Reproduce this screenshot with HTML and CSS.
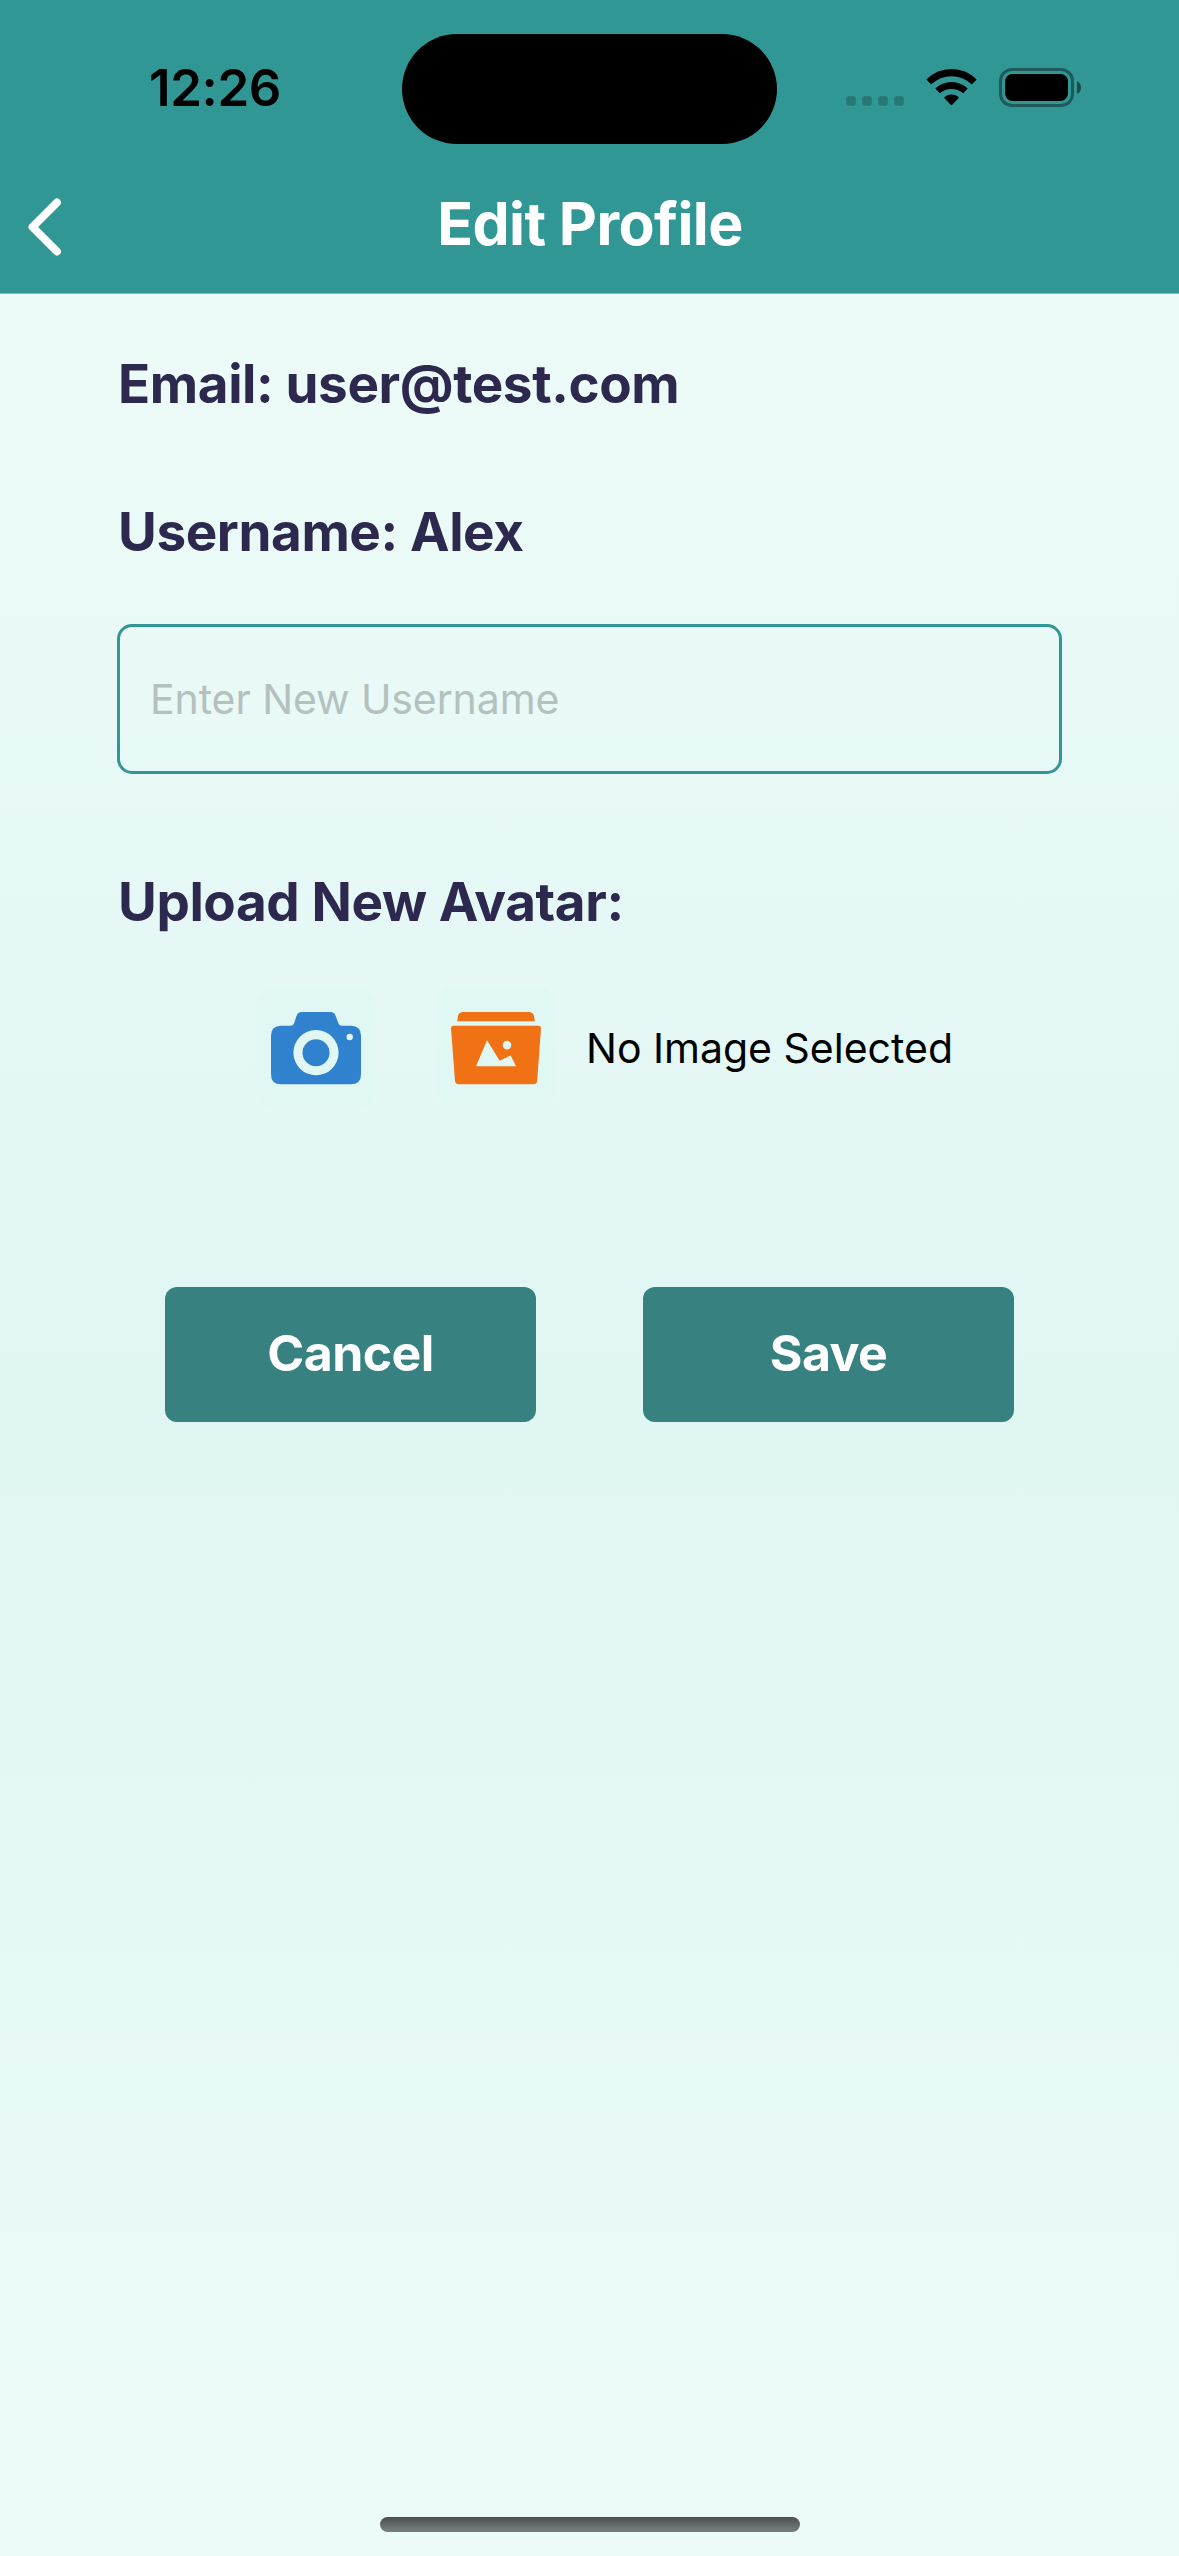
FILE: index.html
```html
<!DOCTYPE html>
<html lang="en">
<head>
<meta charset="utf-8">
<title>Edit Profile</title>
<link rel="stylesheet" href="styles.css">
</head>
<body>
<div class="screen">
  <header class="header">
    <div class="status">
      <div class="time">12:26</div>
      <div class="island"></div>
      <div class="indicators">
        <svg class="dots" width="58" height="10" viewBox="0 0 58 10"><rect width="10" height="10" rx="4"/><rect x="16" width="10" height="10" rx="4"/><rect x="32" width="10" height="10" rx="4"/><rect x="48" width="10" height="10" rx="4"/></svg>
        <svg class="wifi" width="51" height="38" viewBox="0 0 51 38"><path d="M0.3 11.4Q11 1 25.5 1T50.7 11.4L45.8 16.4Q37 8.2 25.500 8.200T5.200 16.400Z"/><path d="M9.300 20.600Q16 13.900 25.500 13.900T41.700 20.600L37.200 25.200Q32 20.900 25.500 20.900T13.800 25.200Z"/><path d="M18 29.700Q21 26.500 25.500 26.500T33 29.700L25.500 37.500Z"/></svg>
        <svg class="battery" width="83" height="39" viewBox="0 0 83 39"><rect class="battery-case" x="1.500" y="1.500" width="72" height="36" rx="11.500"/><rect x="6" y="6" width="63" height="27" rx="7.500"/><path class="battery-tip" d="M78 13Q82 15 82 19.500T78 26Z"/></svg>
      </div>
    </div>
    <div class="navbar">
      <svg class="back" width="34" height="58" viewBox="0 0 34 58"><path d="M29 4.500L4.500 29L29 53.500"/></svg>
      <h1 class="title">Edit Profile</h1>
    </div>
  </header>
  <main class="form">
    <p class="label email">Email: user@test.com</p>
    <p class="label username">Username: Alex</p>
    <input class="field" type="text" placeholder="Enter New Username">
    <p class="label upload">Upload New Avatar:</p>
    <div class="picker">
      <button class="tile" aria-label="Camera"><svg width="120" height="120" viewBox="0 0 120 120"><path fill="#3182ce" fill-rule="evenodd" d="M45.500 24H74.500Q78.300 24 79.500 27.500L82.500 35.500Q83.300 37.700 86 37.700H95Q105 37.700 105 47.700V86.300Q105 96.300 95 96.300H25Q15 96.300 15 86.300V47.700Q15 37.700 25 37.700H34.500Q37.200 37.700 38 35.500L40.700 27.500Q41.900 24 45.500 24ZM60 42.100A22.600 22.600 0 1 0 60 87.300A22.600 22.600 0 1 0 60 42.100ZM60 51.200A13.500 13.500 0 1 1 60 78.200A13.500 13.500 0 1 1 60 51.200ZM93.700 45.800A3.200 3.200 0 1 0 93.700 52.200A3.200 3.200 0 1 0 93.700 45.800Z"/></svg></button>
      <button class="tile" aria-label="Gallery"><svg width="120" height="120" viewBox="0 0 120 120"><g fill="#f07214"><path d="M27.500 24H92.500Q97.200 24 98 28L98.800 33.200H21.200L22 28Q22.800 24 27.500 24Z"/><path fill-rule="evenodd" d="M17.500 37.700H102.500Q105.200 37.700 105 40.500L101.200 92.500Q101 96.300 97.500 96.300H22.500Q19.300 96.300 19 92.500L15 40.500Q14.800 37.700 17.500 37.700ZM40 78.300H80L74.700 67.500L63.700 72.700L51 52.300ZM71 52.800A4.300 4.300 0 1 0 71 61.400A4.300 4.300 0 1 0 71 52.800Z"/></g></svg></button>
      <span class="hint">No Image Selected</span>
    </div>
    <div class="actions">
      <button class="action cancel">Cancel</button>
      <button class="action save">Save</button>
    </div>
  </main>
  <div class="home-bar"></div>
</div>
</body>
</html>
```
FILE: styles.css
```css
* { box-sizing: border-box; margin: 0; padding: 0; }

body, button, input { font-family: Inter, "Liberation Sans", sans-serif; }

.screen {
  width: 1179px;
  height: 2556px;
  display: flex;
  flex-direction: column;
  align-items: stretch;
  background: linear-gradient(180deg, #edfbf8 294px, #e0f6f3 1425px, #edfbf8 2556px);
}

.header {
  height: 294px;
  background: #319795;
  border-bottom: 1px solid #93b5b3;
}

.status {
  height: 177px;
  padding: 33px 98px 0 149px;
  display: grid;
  grid-template-columns: 253px 375px 1fr;
}

.time {
  padding-top: 25px;
  font-size: 51px;
  line-height: 60px;
  font-weight: 600;
  letter-spacing: -0.4px;
}

.island { height: 110.700px; margin-top: 0.500px; border-radius: 56px; background: #000; }

.indicators { display: flex; align-items: flex-start; padding: 35px 0 0 69px; }
.dots { margin-top: 28px; opacity: 0.2; }
.wifi { margin-left: 22px; }
.battery { margin-left: 22px; }
.battery-case { fill: none; stroke: #000; stroke-width: 3; opacity: 0.4; }
.battery-tip { opacity: 0.5; }

.navbar {
  height: 116px;
  padding: 0 28px;
  display: grid;
  grid-template-columns: 34px 1fr 34px;
}

.back { margin-top: 21px; fill: none; stroke: #fff; stroke-width: 8; stroke-linecap: round; stroke-linejoin: round; }
.title {
  padding: 11px 0 0 1px;
  color: #fff;
  font-size: 59px;
  line-height: 72px;
  font-weight: 700;
  letter-spacing: -0.6px;
  text-align: center;
}

.form { flex: 1; padding: 58px 117px 0; display: flex; flex-direction: column; }

.label {
  padding-left: 1px;
  color: #2d294e;
  font-size: 53px;
  line-height: 64px;
  font-weight: 700;
  letter-spacing: -0.4px;
  white-space: nowrap;
}
.username { margin-top: 84px; }
.upload { margin-top: 96px; }

.field {
  height: 150px;
  margin-top: 60px;
  padding: 0 30px;
  border: 3px solid #319795;
  border-radius: 15px;
  background: transparent;
  font-size: 41px;
  letter-spacing: -0.1px;
}
.field::placeholder { color: #b5c1bf; opacity: 1; }

.picker { display: flex; align-items: center; margin-top: 54px; padding-left: 139px; }
.tile {
  width: 120px;
  height: 120px;
  margin-right: 60px;
  border: 0;
  border-radius: 18px;
  background: #e0f7f3;
}
.tile svg { display: block; }
.tile + .hint { margin-left: -30px; }
.hint { font-size: 41px; line-height: 50px; white-space: nowrap; }

.actions { display: flex; justify-content: space-between; margin-top: 179px; padding: 0 48px; }
.action {
  width: 371px;
  height: 135px;
  padding-bottom: 3px;
  border: 0;
  border-radius: 12px;
  background: #378281;
  color: #fff;
  font-size: 50px;
  font-weight: 700;
  letter-spacing: -0.6px;
}

.home-bar {
  width: 420px;
  height: 15px;
  margin: 0 auto 24px;
  border-radius: 8px;
  background: linear-gradient(180deg, #4a4f4e, #7a8180);
}
```
